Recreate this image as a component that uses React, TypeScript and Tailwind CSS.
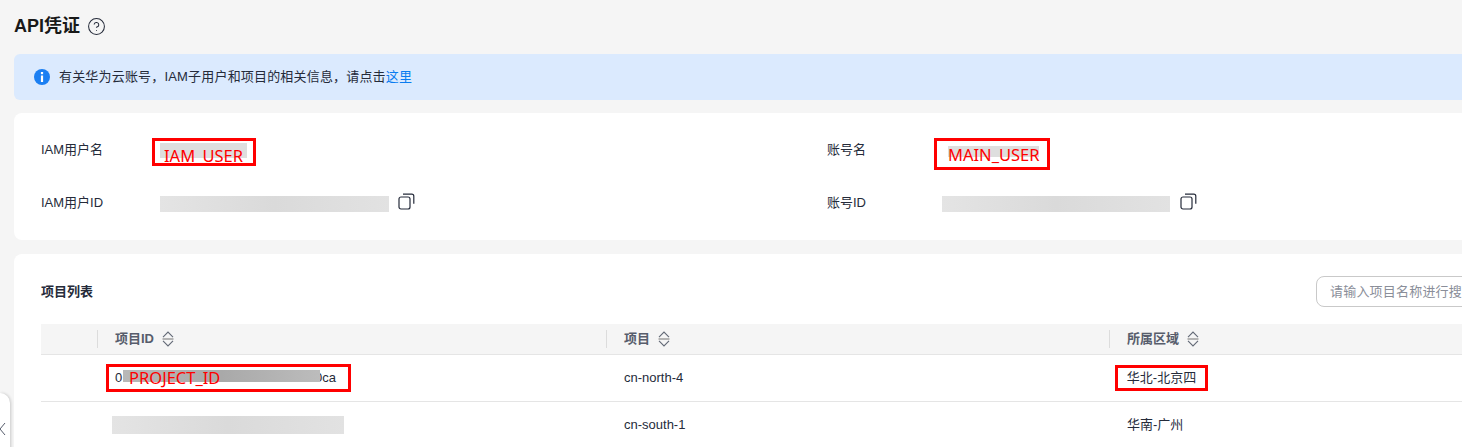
import { CircleHelp } from 'lucide-react'

const font = "font-['Liberation_Sans','Noto_Sans_CJK_SC',sans-serif]"
const markFont = "font-['Noto_Sans',sans-serif]"

function CopyIcon() {
  return (
    <svg width="17" height="17" viewBox="0 0 17 17" fill="none" stroke="#252b3a" strokeWidth="1.2" className="shrink-0">
      <rect x="1" y="4" width="11" height="12" rx="2" />
      <path d="M5 1.2h8.8a2 2 0 0 1 2 2v7.6" />
    </svg>
  )
}

function SortIcon() {
  return (
    <svg width="12" height="16" viewBox="0 0 12 16" fill="none" className="shrink-0">
      <path d="M1 6.2 6 1 11 6.2" stroke="#626976" strokeWidth="1.1" />
      <path d="M1 9.8 6 15 11 9.8" stroke="#626976" strokeWidth="1.1" />
      <rect x="0.5" y="7" width="11" height="2" fill="#b4b4b4" />
    </svg>
  )
}

function Blur({ className }: { className: string }) {
  return <div className={`bg-gradient-to-r from-[#e4e4e4] via-[#dadada] via-50% to-[#e2e2e2] ${className}`} />
}

function HeadCell({ label, width }: { label: string; width: string }) {
  return (
    <div className={`flex items-center shrink-0 ${width}`}>
      <div className="h-[18px] w-px bg-[#dcdcdc]" />
      <span className="ml-[17px] text-[13px] font-bold text-[#575d6c]">{label}</span>
      <span className="ml-[8px]"><SortIcon /></span>
    </div>
  )
}

export default function App() {
  return (
    <div className={`relative h-[447px] w-[1462px] overflow-hidden bg-[#f5f5f5] ${font} text-[#252b3a]`}>
      <div className="w-[1560px] pl-[14px]">
        <div className="flex h-[54px] items-center pb-[2px]">
          <h1 className="text-[18px] font-bold text-[#191919]">API凭证</h1>
          <CircleHelp size={19} strokeWidth={1.3} className="ml-[7px] text-[#252b3a]" />
        </div>

        <div className="flex h-[46px] items-center rounded-[6px] bg-[#dbeafe] pl-[20px] text-[13px] tracking-[0.18px]">
          <svg width="16" height="16" viewBox="0 0 16 16" className="shrink-0">
            <circle cx="8" cy="8" r="8" fill="#1b7ff2" />
            <rect x="6.9" y="3" width="2.2" height="2.2" fill="#fff" />
            <rect x="6.9" y="6.5" width="2.2" height="6.5" fill="#fff" />
          </svg>
          <span className="ml-[9px]">有关华为云账号，IAM子用户和项目的相关信息，请点击<span className="text-[#0a7cf0]">这里</span></span>
        </div>

        <section className="mt-[13px] h-[127px] rounded-[8px] bg-white pl-[27px] pt-[25px] text-[13px]">
          <div className="flex h-[32px] items-center">
            <span className="w-[119px] shrink-0 -translate-y-[4px]">IAM用户名</span>
            <div className="w-[667px] shrink-0">
              <div className="relative -ml-[8px] h-[28px] w-[104px] -translate-y-[2px] overflow-hidden border-[3px] border-[#ff0000]">
                <div className="absolute left-[5px] top-[2px] h-[15px] w-[87px] bg-[#dedede]" />
                <span className={`absolute left-[9px] top-[3px] text-[16.5px] leading-[24px] text-[#ff0000] ${markFont}`}>IAM_USER</span>
              </div>
            </div>
            <span className="w-[115px] shrink-0 -translate-y-[4px]">账号名</span>
            <div className="relative -ml-[8px] h-[32px] w-[116px] border-[3px] border-[#ff0000]">
              <div className="absolute left-[11px] top-[5px] h-[11px] w-[91px] bg-[#dedede]" />
              <span className={`absolute left-[11px] top-[2px] text-[16.5px] leading-[24px] text-[#ff0000] ${markFont}`}>MAIN_USER</span>
            </div>
          </div>
          <div className="mt-[21px] flex h-[26px] items-center">
            <span className="w-[119px] shrink-0 -translate-y-[1px]">IAM用户ID</span>
            <div className="flex w-[667px] shrink-0 items-center">
              <Blur className="h-[16px] w-[229px]" />
              <span className="ml-[9px] -translate-y-[3px]"><CopyIcon /></span>
            </div>
            <span className="w-[115px] shrink-0 -translate-y-[1px]">账号ID</span>
            <Blur className="h-[16px] w-[228px]" />
            <span className="ml-[10px] -translate-y-[3px]"><CopyIcon /></span>
          </div>
        </section>

        <section className="mt-[14px] h-[300px] rounded-[8px] bg-white pl-[27px] pt-[22px] text-[13px]">
          <div className="flex h-[31px] items-center">
            <h2 className="w-[1275px] shrink-0 font-bold">项目列表</h2>
            <div className="flex h-[31px] w-[240px] shrink-0 items-center rounded-[8px] border border-[#c9c9c9] pl-[13px] tracking-[0.2px] text-[#8a8e99]">
              请输入项目名称进行搜索
            </div>
          </div>

          <div className="mt-[17px] flex h-[31px] items-center border-b border-[#e5e5e5] bg-[#f5f5f5] pl-[56px]">
            <HeadCell label="项目ID" width="w-[509px]" />
            <HeadCell label="项目" width="w-[503px]" />
            <HeadCell label="所属区域" width="w-[300px]" />
          </div>

          <div className="flex h-[47px] items-center border-b border-[#e5e5e5] pl-[74px]">
            <div className="flex w-[509px] shrink-0">
              <div className="relative -ml-[9px] flex h-[28px] w-[245px] items-center justify-between border-[3px] border-[#ff0000] pl-[6px] pr-[12px]">
                <span>0</span>
                <span>0ca</span>
                <div className="absolute left-[14px] top-[3px] h-[12px] w-[197px] bg-gradient-to-r from-[#b8b8b8] via-[#a9a9a9] to-[#bcbcbc]" />
                <span className={`absolute left-[20px] top-[-1px] text-[16.5px] leading-[24px] text-[#ff0000] ${markFont}`}>PROJECT_ID</span>
              </div>
            </div>
            <span className="w-[503px] shrink-0">cn-north-4</span>
            <div className="-ml-[12px] flex h-[26px] w-[93px] items-center justify-center border-[3px] border-[#ff0000]">华北-北京四</div>
          </div>

          <div className="flex h-[45px] items-center pl-[71px]">
            <div className="w-[512px] shrink-0"><Blur className="h-[18px] w-[232px]" /></div>
            <span className="w-[503px] shrink-0">cn-south-1</span>
            <span>华南-广州</span>
          </div>
        </section>
      </div>

      {/* collapse handle */}
      <div className="absolute left-0 top-[393px] flex h-[60px] w-[10px] items-end overflow-hidden rounded-tr-[10px] bg-white shadow-[1px_0_3px_rgba(0,0,0,0.18)]">
        <svg width="6" height="14" viewBox="0 0 6 14" fill="none" className="mb-[17px]">
          <path d="M5 1 0 7 5 13" stroke="#575d6c" strokeWidth="1" />
        </svg>
      </div>
    </div>
  )
}
